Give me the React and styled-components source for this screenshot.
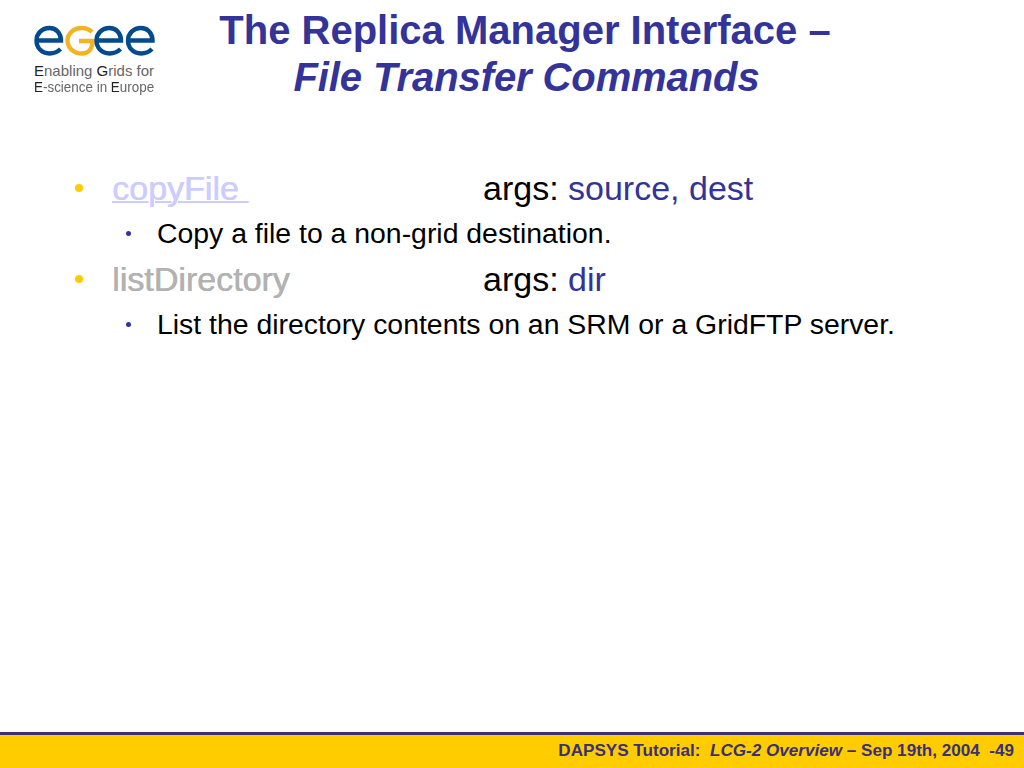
import React from "react";
import styled, { createGlobalStyle } from "styled-components";

const GlobalStyle = createGlobalStyle`
  html, body {
    margin: 0;
    padding: 0;
    background: #fff;
  }
  body {
    font-family: "Liberation Sans", Arial, sans-serif;
  }
`;

const items = [
  {
    name: "copyFile ",
    tone: "link",
    args: "source, dest",
    detail: "Copy a file to a non-grid destination.",
  },
  {
    name: "listDirectory",
    tone: "muted",
    args: "dir",
    detail: "List the directory contents on an SRM or a GridFTP server.",
  },
];

const Logo = () => (
  <LogoBox>
    <svg width="124" height="32" viewBox="0 0 124 32" fill="none" strokeWidth="4.4">
      <path d="M3.5 15.5H27C27 8 22 3 15.5 3C8 3 2.5 8.5 2.5 15.5C2.5 23 8 28.5 15.5 28.5C20 28.5 23.5 27 26.5 24" stroke="#004b8d" />
      <path d="M58 7C55.5 4.5 52 3 47.5 3C40 3 33.5 8.5 33.5 15.5C33.5 23 40 28.5 47.5 28.5C54.5 28.5 58.5 24 58.5 16H45" stroke="#f5b324" />
      <path d="M63.5 15.5H87C87 8 82 3 75.5 3C68 3 62.5 8.5 62.5 15.5C62.5 23 68 28.5 75.5 28.5C80 28.5 83.5 27 86.5 24" stroke="#004b8d" />
      <path d="M95.5 15.5H118.5C118.5 8 113.5 3 107 3C99.5 3 94 8.5 94 15.5C94 23 99.5 28.5 107 28.5C111.5 28.5 115 27 118 24" stroke="#004b8d" />
    </svg>
    <Tagline>
      <TagLine><b>E</b>nabling <b>G</b>rids for</TagLine>
      <TagLine $squeeze><b>E</b>-science in <b>E</b>urope</TagLine>
    </Tagline>
  </LogoBox>
);

const App = () => {
  return (
    <Slide>
      <GlobalStyle />
      <Header>
        <Logo />
        <Title>
          The Replica Manager Interface –
          <br />
          <Subtitle>File Transfer Commands</Subtitle>
        </Title>
      </Header>
      <Body>
        {items.map((item) => (
          <React.Fragment key={item.name}>
            <TopRow>
              <TopBullet />
              <Command $tone={item.tone}>{item.name}</Command>
              <Args>
                args: <ArgValue>{item.args}</ArgValue>
              </Args>
            </TopRow>
            <SubRow>
              <SubBullet />
              <span>{item.detail}</span>
            </SubRow>
          </React.Fragment>
        ))}
      </Body>
      <Footer>
        <span>DAPSYS Tutorial:&nbsp;</span>
        <em>&nbsp;LCG-2 Overview </em>
        <span>– Sep 19th, 2004&nbsp;&nbsp;-49</span>
      </Footer>
    </Slide>
  );
};

export default App;

// Styled Components

const Slide = styled.div`
  width: 1024px;
  height: 768px;
  display: flex;
  flex-direction: column;
  overflow: hidden;
  background: #fff;
`;

const Header = styled.header`
  display: flex;
  align-items: flex-start;
  height: 150px;
  padding: 7px 0 0 34px;
  box-sizing: border-box;
`;

const LogoBox = styled.div`
  width: 124px;
  padding-top: 18px;
  flex-shrink: 0;

  svg {
    display: block;
  }
`;

const Tagline = styled.div`
  margin-top: 6px;
  color: #666;
  font-size: 15px;
  line-height: 16px;
  white-space: nowrap;

  b {
    color: #222;
    font-weight: 400;
  }
`;

const TagLine = styled.div`
  transform-origin: left center;
  ${(p) => p.$squeeze && "transform: scaleX(0.895);"}
`;

const Title = styled.h1`
  flex: 1;
  margin: 0;
  padding-right: 132px;
  box-sizing: border-box;
  text-align: center;
  color: #333399;
  font-size: 40px;
  line-height: 47px;
  font-weight: 700;
  white-space: nowrap;
`;

const Subtitle = styled.em`
  padding-left: 3px;
  letter-spacing: -0.1px;
`;

const Body = styled.main`
  flex: 1;
  padding: 16px 0 0 75px;
`;

const TopRow = styled.div`
  display: flex;
  align-items: center;
  height: 46px;
  padding-bottom: 2px;
  box-sizing: border-box;
  font-size: 34px;
`;

const TopBullet = styled.span`
  width: 8px;
  height: 8px;
  border-radius: 50%;
  background: #ffcc00;
  margin-right: 29px;
  flex-shrink: 0;
`;

const Command = styled.span`
  width: 371px;
  flex-shrink: 0;
  white-space: pre;
  color: ${(p) => (p.$tone === "link" ? "#ccccff" : "#b2b2b2")};
  text-shadow: 0.6px 0 0 currentColor;

  ${(p) => p.$tone === "link" && "text-decoration: underline; text-decoration-thickness: 2px;"}
`;

const Args = styled.span`
  color: #000;
`;

const ArgValue = styled.span`
  color: #333399;
`;

const SubRow = styled.div`
  display: flex;
  align-items: center;
  height: 45px;
  padding: 0 0 3px 51px;
  box-sizing: border-box;
  font-size: 28.4px;
  color: #000;
`;

const SubBullet = styled.span`
  width: 5px;
  height: 5px;
  border-radius: 50%;
  background: #333399;
  margin-right: 26px;
  flex-shrink: 0;
`;

const Footer = styled.footer`
  height: 36px;
  box-sizing: border-box;
  border-top: 3px solid #3a3078;
  background: #ffcc00;
  display: flex;
  align-items: center;
  justify-content: flex-end;
  padding: 0 10px 1px 0;
  color: #3a3078;
  font-size: 17.1px;
  font-weight: 700;
  white-space: pre;
`;
